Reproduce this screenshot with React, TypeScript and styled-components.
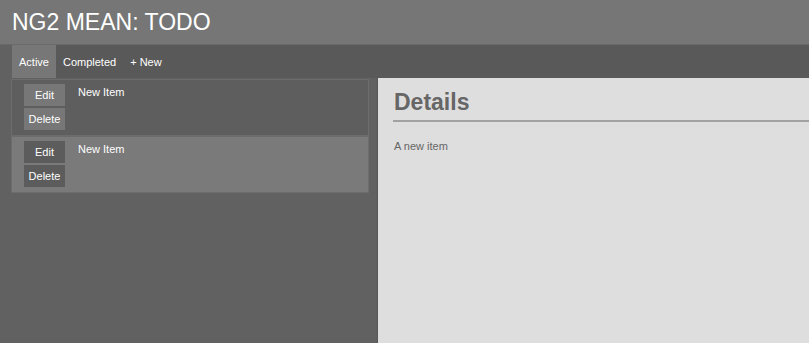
import { useState } from "react";
import styled, { createGlobalStyle } from "styled-components";

interface Todo {
  id: number;
  title: string;
  description: string;
}

const todos: Todo[] = [
  { id: 1, title: "New Item", description: "A new item" },
  { id: 2, title: "New Item", description: "A new item" },
];

const tabs = ["Active", "Completed", "+ New"];

const App = () => {
  const [activeTab, setActiveTab] = useState("Active");
  const [selected, setSelected] = useState(2);

  const current = todos.find((t) => t.id === selected);

  return (
    <>
      <GlobalStyle />
      <Page>
        <Header>
          <Title>NG2 MEAN: TODO</Title>
        </Header>
        <Content>
          <Nav>
            {tabs.map((tab) => (
              <Tab
                key={tab}
                $active={tab === activeTab}
                onClick={() => setActiveTab(tab)}
              >
                {tab}
              </Tab>
            ))}
          </Nav>
          <Columns>
            <LeftColumn>
              <List>
                {todos.map((todo) => (
                  <Item
                    key={todo.id}
                    $selected={todo.id === selected}
                    onClick={() => setSelected(todo.id)}
                  >
                    <Actions>
                      <ActionButton $selected={todo.id === selected}>
                        Edit
                      </ActionButton>
                      <ActionButton $selected={todo.id === selected}>
                        Delete
                      </ActionButton>
                    </Actions>
                    <ItemTitle>{todo.title}</ItemTitle>
                  </Item>
                ))}
              </List>
            </LeftColumn>
            <DetailsPanel>
              <DetailsHeading>Details</DetailsHeading>
              <DetailsText>{current?.description}</DetailsText>
            </DetailsPanel>
          </Columns>
        </Content>
      </Page>
    </>
  );
};

export default App;

const GlobalStyle = createGlobalStyle`
  html, body {
    margin: 0;
    padding: 0;
    height: 100%;
  }

  body {
    font-family: "Liberation Sans", Arial, sans-serif;
    background: #616161;
  }

  #root {
    height: 100%;
  }
`;

const Page = styled.div`
  display: flex;
  flex-direction: column;
  min-height: 100vh;
  background: #616161;
`;

const Header = styled.header`
  height: 45px;
  box-sizing: border-box;
  padding: 0 12px;
  display: flex;
  align-items: center;
  background: #767676;
  border-bottom: 1px solid #6a6a6a;
`;

const Title = styled.h1`
  margin: 0;
  font-size: 23px;
  font-weight: 400;
  color: #ffffff;
  line-height: 1;
  padding-top: 1px;
`;

const Content = styled.div`
  flex: 1;
  display: flex;
  flex-direction: column;
  padding-left: 12px;
`;

const Nav = styled.nav`
  display: flex;
  height: 33px;
  background: #595959;
`;

const Tab = styled.button<{ $active: boolean }>`
  border: none;
  margin: 0;
  padding: 0 7px;
  height: 33px;
  font-family: "Liberation Sans", Arial, sans-serif;
  font-size: 11px;
  color: #ffffff;
  background: ${({ $active }) => ($active ? "#777777" : "transparent")};
  cursor: pointer;

  &:hover {
    background: #707070;
  }
`;

const Columns = styled.div`
  flex: 1;
  display: grid;
  grid-template-columns: 365px 1fr;
`;

const LeftColumn = styled.div`
  padding: 1px 8px 0 0;
  margin-left: -1px;
`;

const List = styled.ul`
  list-style: none;
  margin: 0;
  padding: 1px;
  display: flex;
  flex-direction: column;
  gap: 2px;
  background: #6c6c6c;
`;

const Item = styled.li<{ $selected: boolean }>`
  display: flex;
  align-items: flex-start;
  gap: 13px;
  padding: 4px 12px;
  height: 55px;
  box-sizing: border-box;
  background: ${({ $selected }) => ($selected ? "#7a7a7a" : "#5e5e5e")};
  cursor: pointer;
`;

const Actions = styled.div`
  display: flex;
  flex-direction: column;
  gap: 2px;
`;

const ActionButton = styled.button<{ $selected: boolean }>`
  width: 41px;
  height: 22px;
  border: none;
  padding: 0;
  font-family: "Liberation Sans", Arial, sans-serif;
  font-size: 11px;
  color: #ffffff;
  background: ${({ $selected }) => ($selected ? "#5c5c5c" : "#777777")};
  cursor: pointer;
`;

const ItemTitle = styled.span`
  font-size: 11px;
  color: #ffffff;
  line-height: 14px;
  padding-top: 1px;
`;

const DetailsPanel = styled.section`
  background: #dedede;
  border-left: 1px solid #575757;
  padding: 11px 0 0 15px;
`;

const DetailsHeading = styled.h2`
  margin: 0;
  padding-bottom: 4px;
  padding-left: 1px;
  font-size: 23px;
  font-weight: 700;
  color: #666666;
  border-bottom: 2px solid #a2a2a2;
`;

const DetailsText = styled.p`
  margin: 18px 0 0 1px;
  font-size: 11px;
  color: #666666;
`;
